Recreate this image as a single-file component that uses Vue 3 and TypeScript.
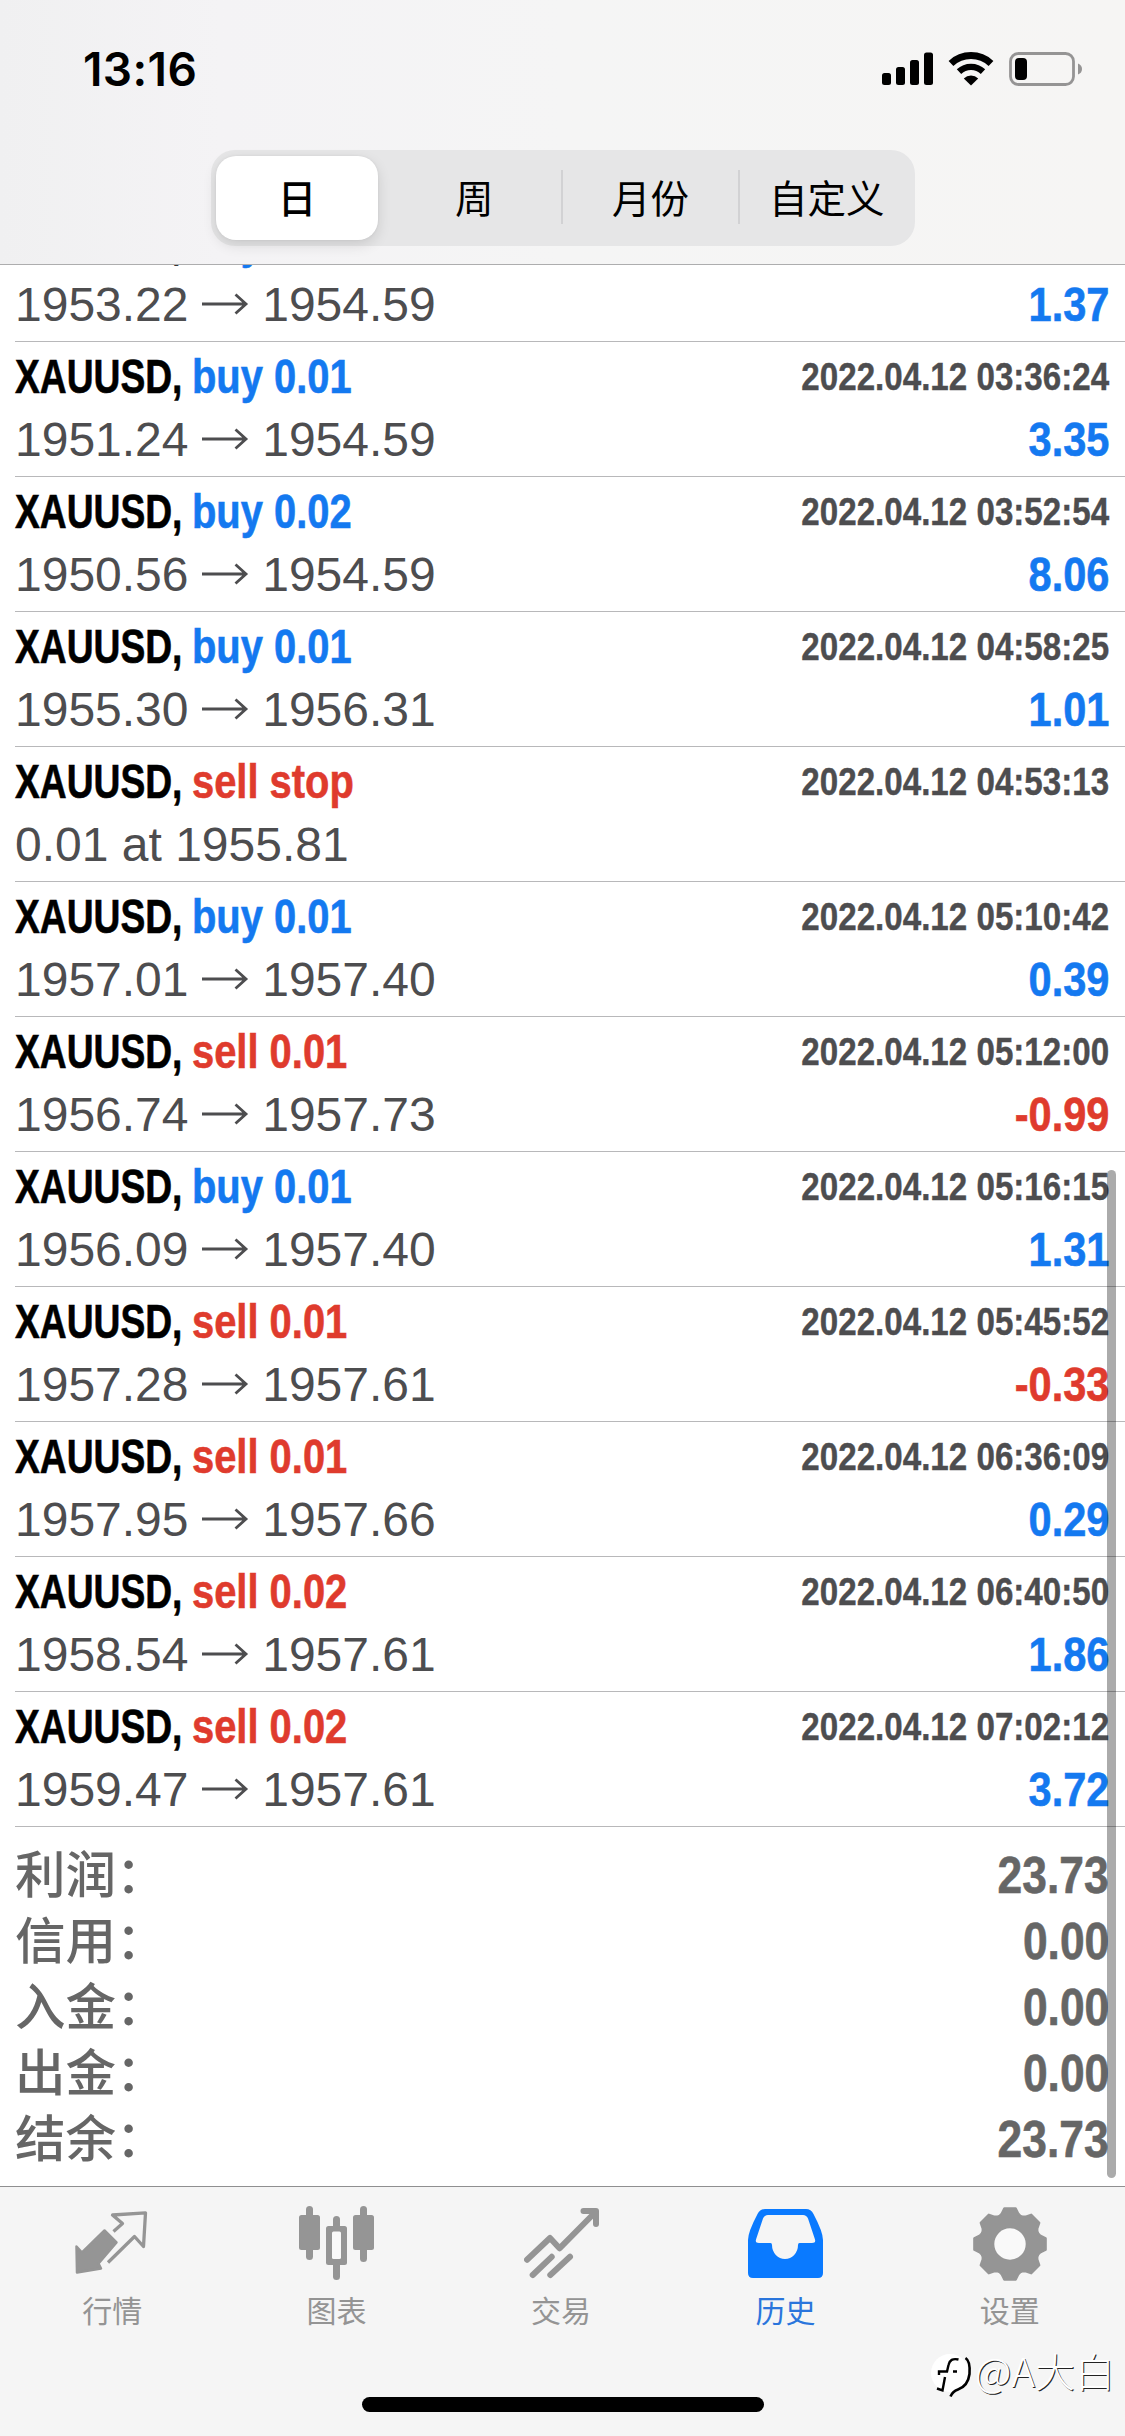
<script setup lang="ts">
interface Deal {
  side: 'buy' | 'sell'
  action: string
  time: string
  from?: string
  to?: string
  note?: string
  profit?: string
}

const periods: string[] = ['日', '周', '月份', '自定义']

const deals: Deal[] = [
  { side: 'buy', action: 'buy 0.01', time: '', from: '1953.22', to: '1954.59', profit: '1.37' },
  { side: 'buy', action: 'buy 0.01', time: '2022.04.12 03:36:24', from: '1951.24', to: '1954.59', profit: '3.35' },
  { side: 'buy', action: 'buy 0.02', time: '2022.04.12 03:52:54', from: '1950.56', to: '1954.59', profit: '8.06' },
  { side: 'buy', action: 'buy 0.01', time: '2022.04.12 04:58:25', from: '1955.30', to: '1956.31', profit: '1.01' },
  { side: 'sell', action: 'sell stop', time: '2022.04.12 04:53:13', note: '0.01 at 1955.81' },
  { side: 'buy', action: 'buy 0.01', time: '2022.04.12 05:10:42', from: '1957.01', to: '1957.40', profit: '0.39' },
  { side: 'sell', action: 'sell 0.01', time: '2022.04.12 05:12:00', from: '1956.74', to: '1957.73', profit: '-0.99' },
  { side: 'buy', action: 'buy 0.01', time: '2022.04.12 05:16:15', from: '1956.09', to: '1957.40', profit: '1.31' },
  { side: 'sell', action: 'sell 0.01', time: '2022.04.12 05:45:52', from: '1957.28', to: '1957.61', profit: '-0.33' },
  { side: 'sell', action: 'sell 0.01', time: '2022.04.12 06:36:09', from: '1957.95', to: '1957.66', profit: '0.29' },
  { side: 'sell', action: 'sell 0.02', time: '2022.04.12 06:40:50', from: '1958.54', to: '1957.61', profit: '1.86' },
  { side: 'sell', action: 'sell 0.02', time: '2022.04.12 07:02:12', from: '1959.47', to: '1957.61', profit: '3.72' },
]

const totals: { label: string; value: string }[] = [
  { label: '利润', value: '23.73' },
  { label: '信用', value: '0.00' },
  { label: '入金', value: '0.00' },
  { label: '出金', value: '0.00' },
  { label: '结余', value: '23.73' },
]

// Eight-toothed gear outline around (38, 38)
function gearPath(): string {
  const profile: [number, number][] = [[-20, 30], [-15.5, 31.2], [-9, 36], [9, 36], [15.5, 31.2], [20, 30]]
  const pts: string[] = []
  for (let i = 0; i < 8; i++) {
    for (const [offset, radius] of profile) {
      const a = ((i * 45 + offset - 90) * Math.PI) / 180
      pts.push(`${(38 + radius * Math.cos(a)).toFixed(2)} ${(38 + radius * Math.sin(a)).toFixed(2)}`)
    }
  }
  return `M${pts.join('L')}Z M53 38a15 15 0 1 0-30 0a15 15 0 1 0 30 0Z`
}
const gear = gearPath()
</script>

<template>
  <div class="screen">
    <header class="header">
      <div class="status">
        <span class="clock">13:16</span>
        <div class="status-icons">
          <svg class="signal" width="51" height="33" viewBox="0 0 51 33">
            <rect x="0" y="21" width="9" height="12" rx="2.5" />
            <rect x="14" y="15" width="9" height="18" rx="2.5" />
            <rect x="28" y="8" width="9" height="25" rx="2.5" />
            <rect x="42" y="0.5" width="9" height="32.5" rx="2.5" />
          </svg>
          <svg class="wifi" width="46" height="34" viewBox="0 0 46 34">
            <g fill="none" stroke="#000">
              <path d="M3 11.5A29.3 29.3 0 0 1 43 11.5" stroke-width="7" />
              <path d="M11 19.6A17.5 17.5 0 0 1 35 19.6" stroke-width="6.4" />
            </g>
            <path d="M23 33.5L15.8 26.4A10.5 10.5 0 0 1 30.2 26.4Z" />
          </svg>
          <svg class="battery" width="74" height="34" viewBox="0 0 74 34">
            <rect x="1.5" y="1.5" width="63" height="31" rx="8" fill="none" stroke="#959494" stroke-width="2.8" />
            <rect x="6" y="6" width="12" height="22" rx="4" />
            <path d="M69 11.5Q73 13 73 17Q73 21 69 22.500Z" fill="#959494" />
          </svg>
        </div>
      </div>
      <nav class="segments">
        <div v-for="(p, i) in periods" :key="p" class="segment" :class="{ active: i === 0 }">{{ p }}</div>
      </nav>
    </header>

    <main class="history">
      <div class="rows">
        <section v-for="(d, i) in deals" :key="i" class="deal">
          <div class="line">
            <span class="symbol"><span class="squeeze">XAUUSD,</span></span>
            <span class="action" :class="d.side">{{ d.action }}</span>
            <span v-if="d.time" class="time">{{ d.time }}</span>
          </div>
          <div class="line second">
            <span v-if="d.note" class="price">{{ d.note }}</span>
            <span v-else class="price">
              {{ d.from }}
              <svg class="arrow" width="48" height="24" viewBox="0 0 48 24">
                <path d="M1 12H45M34.500 2.500L45 12L34.500 21.500" fill="none" stroke="#4d4d4f" stroke-width="2.800" />
              </svg>
              {{ d.to }}
            </span>
            <span v-if="d.profit" class="profit" :class="{ loss: d.profit.startsWith('-') }">{{ d.profit }}</span>
          </div>
        </section>
      </div>
      <section class="totals">
        <div v-for="t in totals" :key="t.label" class="total">
          <span class="total-label">{{ t.label }}：</span>
          <span class="total-value">{{ t.value }}</span>
        </div>
      </section>
      <div class="scrollbar"></div>
    </main>

    <footer class="tabs">
      <div class="tab">
        <div class="glyph">
          <svg width="74" height="66" viewBox="0 0 74 66">
            <path d="M1.500 35.500L7 41.500L29.500 19.500L41.500 31.500L23.500 52.500L26 57.500L2 61.500Z" fill="#959595" stroke="#959595" stroke-width="2.500" stroke-linejoin="round" />
            <path d="M38.500 20.500L47.500 12.500L37.500 4L70.500 1.800L68.500 35.500L59.500 25.500L33 51.500" fill="none" stroke="#959595" stroke-width="3.300" stroke-linejoin="round" />
          </svg>
        </div>
        <span>行情</span>
      </div>
      <div class="tab">
        <div class="glyph">
          <svg width="75" height="75" viewBox="0 0 75 75" fill="#959595">
            <rect x="7" y="0" width="7" height="54" rx="3.500" />
            <rect x="0" y="9" width="21" height="35" rx="2.500" />
            <rect x="34" y="10" width="7" height="64" rx="3.500" />
            <rect x="27" y="20" width="21" height="39" rx="2.500" />
            <rect x="33" y="25.500" width="9" height="27.500" rx="1.500" fill="#f9f9f9" />
            <rect x="61" y="0" width="7" height="56" rx="3.500" />
            <rect x="54" y="9" width="21" height="35" rx="2.500" />
          </svg>
        </div>
        <span>图表</span>
      </div>
      <div class="tab">
        <div class="glyph">
          <svg width="75" height="75" viewBox="0 -2 75 75" fill="none" stroke="#959595" stroke-width="6" stroke-linecap="round" stroke-linejoin="round">
            <path d="M3 51.700L26 30L35.500 40.300L71 4.500" />
            <path d="M59.500 3H72V16" />
            <path d="M8.700 67L27.700 48.800" />
            <path d="M26.300 67L46 48.800" />
          </svg>
        </div>
        <span>交易</span>
      </div>
      <div class="tab current">
        <div class="glyph">
          <svg width="75" height="69" viewBox="0 0 75 69">
            <path fill-rule="evenodd" fill="#0a7aff" d="M17 0H58Q63 0 65.500 5Q75 23 75 31V64Q75 69 70 69H5Q0 69 0 64V31Q0 23 9.500 5Q12 0 17 0ZM20 6Q16.500 6 15 9.500L8 30.500Q7 34 11 34H22.500Q24 34 24 36A13 14 0 0 0 50 36Q50 34 51.500 34H64Q68 34 67 30.500L60 9.500Q58.500 6 55 6Z" />
          </svg>
        </div>
        <span>历史</span>
      </div>
      <div class="tab">
        <div class="glyph">
          <svg width="76" height="76" viewBox="0 0 76 76">
            <path :d="gear" fill="#959595" fill-rule="evenodd" stroke="#959595" stroke-width="2.500" stroke-linejoin="round" />
            <circle cx="38" cy="38" r="15.700" fill="#f9f9f9" />
          </svg>
        </div>
        <span>设置</span>
      </div>
      <div class="home-indicator"></div>
      <div class="watermark">
        <svg width="42" height="48" viewBox="0 0 42 48">
          <circle cx="19" cy="20" r="19" fill="#fff" />
          <path d="M34.500 5Q39.500 8 38.500 21Q37 33 27 36.500Q21.500 38.500 19.500 43.500" fill="none" stroke="#000" stroke-width="2.600" />
          <path d="M27.500 6.500Q19 4.500 17.500 12L16 18.500H8V22M14 24L11.500 37.500L6 35.500M22 18.500H26" fill="none" stroke="#000" stroke-width="2.400" />
        </svg>
        <span>@A大白</span>
      </div>
    </footer>
  </div>
</template>

<style>
body {
  background: #fff;
}
</style>

<style scoped>
.screen {
  width: 1125px;
  height: 2436px;
  display: flex;
  flex-direction: column;
  overflow: hidden;
  background: #fff;
  font-family: "Liberation Sans", "Noto Sans CJK SC", sans-serif;
}
.header {
  flex: none;
  box-sizing: border-box;
  height: 265px;
  border-bottom: 1px solid #adadae;
  background: linear-gradient(90deg, #f0f0f1 0, #f4f3f5 220px, #f5f5f5 50%, #f6f5f4 100%);
}
.status {
  display: flex;
  justify-content: space-between;
  height: 150px;
  padding: 0 42px 0 83px;
}
.clock {
  margin-top: 41px;
  font: 600 46px/56px Inter, sans-serif;
  letter-spacing: 0.4px;
}
.status-icons {
  display: flex;
  padding-top: 52px;
}
.wifi {
  margin-left: 15px;
}
.battery {
  margin-left: 15px;
}
.segments {
  box-sizing: border-box;
  display: flex;
  width: 704px;
  height: 96px;
  margin-left: 211px;
  padding: 6px 0 6px 5px;
  border-radius: 24px;
  background: #e6e6e7;
}
.segment {
  flex: 1;
  position: relative;
  text-align: center;
  font: 400 38.5px/80px "Noto Sans CJK SC", sans-serif;
}
.segment.active {
  flex: none;
  width: 162px;
  margin-right: 8px;
  border-radius: 20px;
  background: #fff;
  font-weight: 500;
  box-shadow: 0 5px 14px rgba(0, 0, 0, 0.12), 0 0 3px rgba(0, 0, 0, 0.06);
}
.segment:nth-child(n + 3)::before {
  content: "";
  position: absolute;
  left: -1px;
  top: 14px;
  width: 2px;
  height: 54px;
  background: #d2d2d4;
}
.history {
  position: relative;
  flex: 1;
  overflow: hidden;
}
.rows {
  margin-top: -58px;
}
.deal {
  box-sizing: border-box;
  height: 135px;
  margin-left: 15px;
  padding: 9px 16px 0 0;
  border-bottom: 1px solid #b8b8ba;
}
.line {
  display: flex;
  height: 52px;
  line-height: 52px;
  font-size: 48px;
  white-space: nowrap;
}
.second {
  margin-top: 11px;
}
.symbol {
  width: 177px;
  font-weight: 700;
  -webkit-text-stroke: 0.6px currentColor;
}
.squeeze {
  display: inline-block;
  transform: scaleX(0.775);
  transform-origin: 0 50%;
}
.action {
  font-weight: 700;
  transform: scaleX(0.831);
  transform-origin: 0 50%;
  -webkit-text-stroke: 0.6px currentColor;
}
.buy {
  color: #1479f0;
}
.sell {
  color: #df3b2d;
}
.time {
  margin-left: auto;
  font-size: 39px;
  font-weight: 700;
  color: #4d4d4f;
  transform: scaleX(0.85);
  transform-origin: 100% 50%;
  -webkit-text-stroke: 0.4px currentColor;
}
.price {
  color: #4d4d4f;
}
.arrow {
  margin: 0 0 0 -1px;
  vertical-align: 5px;
}
.profit {
  margin-left: auto;
  font-weight: 700;
  color: #1479f0;
  transform: scaleX(0.865);
  transform-origin: 100% 50%;
  -webkit-text-stroke: 0.6px currentColor;
}
.profit.loss {
  color: #df3b2d;
}
.totals {
  padding: 11px 16px 0 15px;
}
.total {
  display: flex;
  justify-content: space-between;
  align-items: baseline;
  height: 66px;
  line-height: 66px;
  font-size: 51px;
  color: #666;
}
.total-label {
  font-family: "Noto Sans CJK SC", sans-serif;
  font-size: 50.5px;
  font-weight: 500;
}
.total-value {
  font-weight: 700;
  transform: scaleX(0.87);
  transform-origin: 100% 50%;
  -webkit-text-stroke: 0.6px currentColor;
}
.scrollbar {
  position: absolute;
  right: 9px;
  top: 905px;
  width: 9px;
  height: 1008px;
  border-radius: 5px;
  background: rgba(0, 0, 0, 0.33);
}
.tabs {
  position: relative;
  flex: none;
  box-sizing: border-box;
  display: flex;
  height: 250px;
  padding-right: 3px;
  border-top: 1px solid #8f8f90;
  background: #f5f5f5;
}
.tab {
  flex: 1;
  display: flex;
  flex-direction: column;
  align-items: center;
  padding-top: 18px;
  color: #949494;
  font: 400 30px/40px "Noto Sans CJK SC", sans-serif;
}
.tab span {
  margin-top: 7px;
}
.tab.current {
  color: #2a75dc;
}
.glyph {
  display: flex;
  align-items: center;
  justify-content: center;
  height: 77px;
}
.home-indicator {
  position: absolute;
  left: 362px;
  top: 210px;
  width: 402px;
  height: 15px;
  border-radius: 8px;
  background: #000;
}
.watermark {
  position: absolute;
  left: 931px;
  top: 166px;
  display: flex;
  color: #fff;
  font: 300 40px/44px "Noto Sans CJK SC", sans-serif;
  text-shadow: 1px 1px 0 #222;
  white-space: nowrap;
}
.watermark span {
  margin: -5px 0 0 2px;
}
</style>
